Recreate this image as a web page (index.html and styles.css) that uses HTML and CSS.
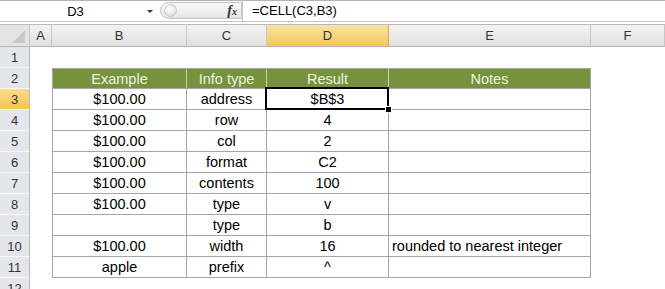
FILE: index.html
```html
<!DOCTYPE html>
<html lang="en">
<head>
    <meta charset="UTF-8">
    <title>CELL function</title>
    <link rel="stylesheet" href="styles.css">
</head>
<body>
    <div class="formula-bar">
        <div class="name-box"><span class="ref">D3</span><span class="drop"></span></div>
        <div class="fx-pill"><span class="knob"></span><span class="fx">f<small>x</small></span></div>
        <div class="formula">=CELL(C3,B3)</div>
    </div>

    <div class="sheet">
        <!-- column headers -->
        <div class="ch corner"><span class="tri"></span></div>
        <div class="ch">A</div>
        <div class="ch">B</div>
        <div class="ch">C</div>
        <div class="ch active">D</div>
        <div class="ch">E</div>
        <div class="ch">F</div>

        <div class="rh">1</div><div></div><div></div><div></div><div></div><div></div><div></div>

        <div class="rh">2</div><div></div>
        <div class="c hd first">Example</div>
        <div class="c hd">Info type</div>
        <div class="c hd">Result</div>
        <div class="c hd last">Notes</div>
        <div></div>

        <div class="rh active">3</div><div></div>
        <div class="c first">$100.00</div><div class="c">address</div><div class="c sel">$B$3</div><div class="c"></div><div></div>

        <div class="rh">4</div><div></div>
        <div class="c first">$100.00</div><div class="c">row</div><div class="c">4</div><div class="c"></div><div></div>

        <div class="rh">5</div><div></div>
        <div class="c first">$100.00</div><div class="c">col</div><div class="c">2</div><div class="c"></div><div></div>

        <div class="rh">6</div><div></div>
        <div class="c first">$100.00</div><div class="c">format</div><div class="c">C2</div><div class="c"></div><div></div>

        <div class="rh">7</div><div></div>
        <div class="c first">$100.00</div><div class="c">contents</div><div class="c">100</div><div class="c"></div><div></div>

        <div class="rh">8</div><div></div>
        <div class="c first">$100.00</div><div class="c">type</div><div class="c">v</div><div class="c"></div><div></div>

        <div class="rh">9</div><div></div>
        <div class="c first"></div><div class="c">type</div><div class="c">b</div><div class="c"></div><div></div>

        <div class="rh">10</div><div></div>
        <div class="c first">$100.00</div><div class="c">width</div><div class="c">16</div><div class="c note">rounded to nearest integer</div><div></div>

        <div class="rh">11</div><div></div>
        <div class="c first">apple</div><div class="c">prefix</div><div class="c">^</div><div class="c"></div><div></div>

        <div class="rh">12</div><div></div><div></div><div></div><div></div><div></div><div></div>
    </div>
</body>
</html>
```

FILE: styles.css
```css
body {
    margin: 0;
    background: #fff;
    font-family: "Liberation Sans", Arial, sans-serif;
    color: #000;
    overflow: hidden;
}

/* formula bar */
.formula-bar {
    display: flex;
    height: 22px;
    box-sizing: border-box;
    border-top: 1px solid #b4b4b4;
    border-bottom: 1px solid #c4c4c4;
    margin-bottom: 2px;
}
.name-box {
    width: 158px;
    display: flex;
    align-items: center;
    position: relative;
    font-size: 13px;
}
.name-box .ref {
    flex: 1;
    text-align: center;
    padding-left: 4px;
}
.name-box .drop {
    width: 0;
    height: 0;
    border-left: 3px solid transparent;
    border-right: 3px solid transparent;
    border-top: 3px solid #333;
    margin-right: 5px;
}
.fx-pill {
    width: 82px;
    margin: 1px 0 2px 2px;
    box-sizing: border-box;
    border: 1px solid #c2c2c2;
    border-radius: 10px 0 0 10px;
    background: linear-gradient(#fafafa, #e6e6e6);
    display: flex;
    align-items: center;
    justify-content: space-between;
    padding: 0 4px 0 3px;
}
.knob {
    width: 11px;
    height: 11px;
    border-radius: 50%;
    background: radial-gradient(circle at 40% 35%, #fff, #d4d4d4);
    border: 1px solid #c8c8c8;
}
.fx {
    font-family: "Liberation Serif", serif;
    font-style: italic;
    font-weight: bold;
    font-size: 14px;
    color: #333;
}
.fx small {
    font-size: 10px;
}
.formula {
    flex: 1;
    border-left: 1px solid #c8c8c8;
    font-size: 13px;
    line-height: 20px;
    padding-left: 9px;
}

/* sheet grid */
.sheet {
    display: grid;
    grid-template-columns: 30px 22px 135px 80px 122px 202px 1fr;
    grid-template-rows: 23px;
    grid-auto-rows: 21px;
    font-size: 14.5px;
}
.ch {
    box-sizing: border-box;
    border-top: 1px solid #b9b9b9;
    border-right: 1px solid #c6c6c6;
    border-bottom: 1px solid #b4b4b4;
    background: linear-gradient(#f2f2f2, #e0e0e0);
    font-size: 13px;
    color: #333;
    text-align: center;
    line-height: 21px;
}
.ch.corner {
    position: relative;
    background: #e2e4e8;
}
.tri {
    position: absolute;
    right: 4px;
    bottom: 3px;
    width: 0;
    height: 0;
    border-left: 13px solid transparent;
    border-bottom: 13px solid #c6c9ce;
}
.ch.active {
    background: linear-gradient(#fbe3a6, #f4c65c);
    border-right-color: #e0a84a;
}
.rh {
    box-sizing: border-box;
    background: #e3e6eb;
    border-right: 1px solid #b4b9c0;
    border-bottom: 1px solid #f6f7f9;
    font-size: 13px;
    color: #333;
    text-align: center;
    line-height: 21px;
}
.rh.active {
    background: linear-gradient(#fbdc8e, #f3c453);
}

/* table cells */
.c {
    box-sizing: border-box;
    border-right: 1px solid #a6a6a6;
    border-bottom: 1px solid #a6a6a6;
    text-align: center;
    line-height: 21px;
    white-space: nowrap;
}
.c.first {
    border-left: 1px solid #a6a6a6;
}
.c.hd {
    background: #76923c;
    color: #eef3e2;
    border-top: 1px solid #a6a6a6;
    border-right-color: #c9cfbd;
    border-bottom-color: #a6a6a6;
}
.c.hd.last {
    border-right-color: #a6a6a6;
}
.c.note {
    text-align: left;
    padding-left: 3px;
}
.c.sel {
    position: relative;
}
.c.sel::after {
    content: "";
    position: absolute;
    top: -2px;
    left: -2px;
    right: -1px;
    bottom: -1px;
    border: 2px solid #000;
}
.c.sel::before {
    content: "";
    position: absolute;
    right: -4px;
    bottom: -4px;
    width: 5px;
    height: 5px;
    background: #000;
    border: 1px solid #fff;
    z-index: 1;
}
```
